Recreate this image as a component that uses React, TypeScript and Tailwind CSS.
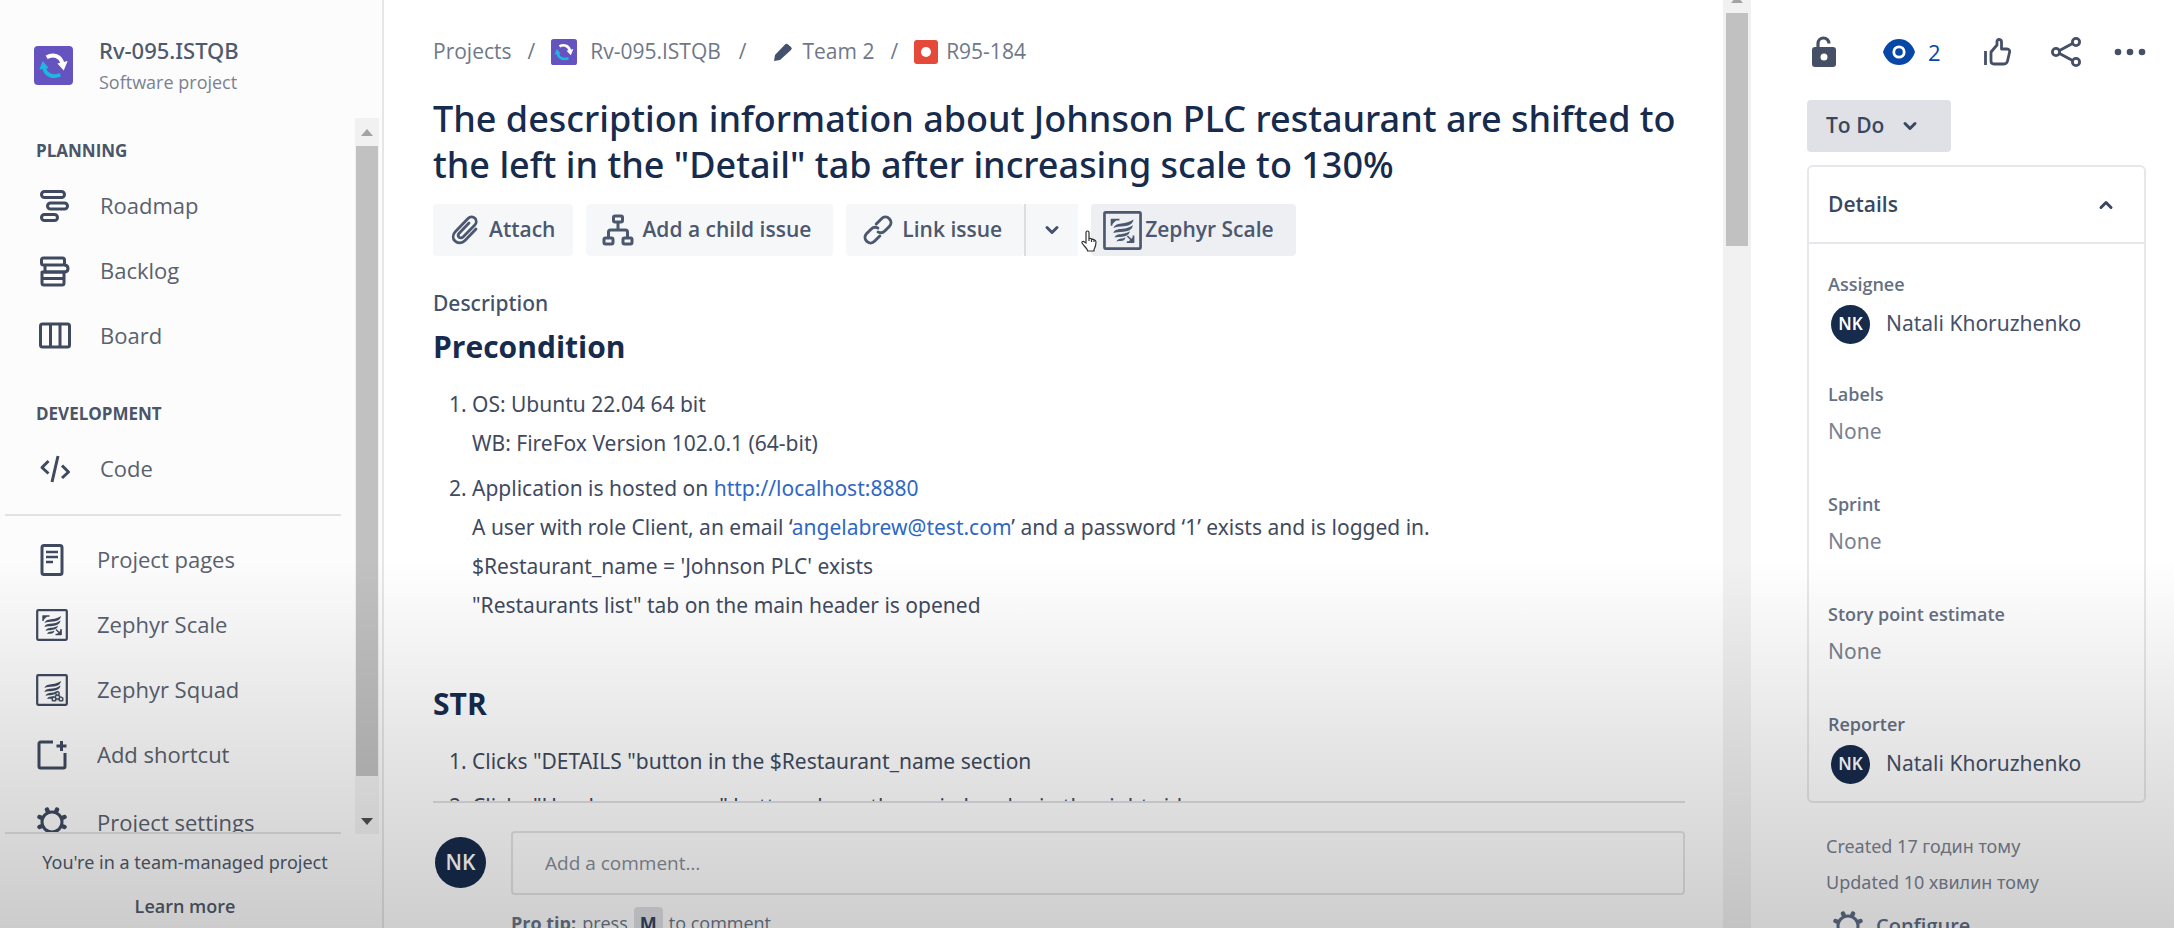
import React from "react";

const Arrow = ({ down = false, cls = "" }: { down?: boolean; cls?: string }) => (
  <svg viewBox="0 0 12 7" className={cls} aria-hidden="true">
    <path d={down ? "M0 0h12L6 7z" : "M0 7h12L6 0z"} fill="currentColor" />
  </svg>
);

const Logo = ({ cls }: { cls: string }) => (
  <svg viewBox="0 0 40 40" className={cls} aria-hidden="true">
    <rect width="40" height="40" rx="4" fill="#6554c0" />
    <path d="M13 11.500c7-4 14-1 16 6" stroke="#fff" strokeWidth="4" fill="none" />
    <path d="M24 18l10.500-2.500-4 9.500z" fill="#fff" />
    <path d="M27 29.500c-7 3-15 1-16.500-7" stroke="#1fb6e0" strokeWidth="4" fill="none" />
    <path d="M5.500 24l3.500-8.500 6 7z" fill="#1fb6e0" />
  </svg>
);

const Icon = ({ children, cls = "size-8" }: { children: React.ReactNode; cls?: string }) => (
  <svg
    viewBox="0 0 32 32"
    className={`shrink-0 ${cls}`}
    fill="none"
    stroke="currentColor"
    strokeWidth="3"
    strokeLinejoin="round"
    aria-hidden="true"
  >
    {children}
  </svg>
);

const Roadmap = () => (
  <Icon>
    <rect x="2.500" y="1.500" width="23" height="6" rx="3" />
    <rect x="8.500" y="13" width="20" height="6" rx="3" />
    <rect x="2.500" y="24.500" width="16" height="6" rx="3" />
  </Icon>
);
const Backlog = () => (
  <Icon>
    <rect x="2.500" y="3" width="23" height="7" rx="2" />
    <path d="M25 10c3 0 4 1 4 3.500S28 17 25 17H6V10" />
    <path d="M3 17h22v6.500H3zM3 23.500h22V28a2 2 0 0 1-2 2H5a2 2 0 0 1-2-2z" />
  </Icon>
);
const Board = () => (
  <Icon>
    <rect x="1.500" y="4" width="29" height="23" rx="2" />
    <path d="M11.500 4v23M21 4v23" />
  </Icon>
);
const Code = () => (
  <Icon>
    <path d="M9.500 8L3 14.500l6.500 6M23 12.500l6.500 6.500-6.500 6M19 3l-6 26" />
  </Icon>
);
const Pages = () => (
  <Icon>
    <rect x="6" y="1.500" width="20" height="29" rx="2" />
    <path d="M10 8h12M10 13h12M10 18h7" strokeWidth="2.500" />
  </Icon>
);
const Zephyr = ({ squad = false, cls = "size-8" }: { squad?: boolean; cls?: string }) => (
  <Icon cls={cls}>
    <rect x="1.200" y="1.200" width="29.600" height="29.600" rx="1" strokeWidth="2.200" />
    <g fill="currentColor" stroke="none">
      <path d="M8.500 14c1-3 4-3.500 8-4 3-.4 5.500-1 8.500-3-.5 4-4 5.200-8 5.600-3.500.3-6 .4-8.500 1.400z" />
      <path d="M8.500 18c.8-2.800 3.500-3 7.500-3.400 3-.3 5.500-1 8.500-3-.5 4-4 5-8 5.400-3.200.3-5.500.3-8 1z" />
      <path d="M9.500 21.800c1-2.500 3-2.700 6-3 2.700-.3 4.500-.8 6.500-2.200-.5 3.200-3.200 4.200-6.300 4.500-2.400.3-4 .2-6.200.7z" />
      <path d="M11 25c1-2 2.500-2.200 4.300-2.400 1.200-.1 2-.4 3.200-1.100-.4 2.300-2 3-3.900 3.200-1.400.1-2.300 0-3.600.3z" />
    </g>
    {squad ? (
      <g strokeWidth="1.400">
        <path d="M21.500 15.500l7 12.500H15z" fill="#e6e6e6" stroke="none" />
        <circle cx="21.500" cy="19.500" r="1.700" />
        <circle cx="18" cy="25" r="1.900" />
        <circle cx="25" cy="25" r="1.900" />
        <path d="M20.500 21l-1.500 2M22.500 21l1.500 2M20 25h3" />
      </g>
    ) : (
      <g>
        <path d="M7 12V7h6.500M25 20v5.500h-5.500" strokeWidth="1.400" />
        <path d="M7 7h4.500L7 11.500zM25.500 26H20l5.500-5.500z" fill="currentColor" stroke="none" />
        <path d="M24 24.500l-4-4" strokeWidth="1.400" />
      </g>
    )}
  </Icon>
);
const Shortcut = () => (
  <Icon>
    <path d="M17 3H4.500A1.500 1.500 0 0 0 3 4.500v23A1.500 1.500 0 0 0 4.500 29h23a1.500 1.500 0 0 0 1.500-1.500V14" />
    <path d="M25.500 2v10M20.500 7h10" />
  </Icon>
);
const Gear = () => (
  <Icon>
    <circle cx="16" cy="16" r="10" strokeWidth="3" />
    <path
      d="M12 6l-1-2.500M20 6l1-2.500M26 12l2.500-1M26 20l2.500 1M20 26l1 2.500M12 26l-1 2.500M6 20l-2.500 1M6 12l-2.500-1"
      strokeWidth="4.500"
      strokeLinecap="round"
    />
  </Icon>
);
const Clip = () => (
  <Icon>
    <path
      d="M27 15L16 26.500c-3 3-7.500 3-10 .5s-2.500-6.500.5-9.500L19 4.500c2-2 5-2 7-.2 1.800 2 1.600 5-.4 7L14 23c-1.200 1.200-3 1.200-4 .2s-1-2.700.2-4L20 9"
      strokeWidth="2.800"
      strokeLinecap="round"
    />
  </Icon>
);
const Tree = () => (
  <Icon>
    <rect x="11.500" y="2" width="9" height="6" rx="1.500" />
    <rect x="2" y="24" width="9" height="6" rx="1.500" />
    <rect x="21" y="24" width="9" height="6" rx="1.500" />
    <path d="M16 8v8M6.500 24v-6a2 2 0 0 1 2-2h15a2 2 0 0 1 2 2v6" />
  </Icon>
);
const Link = () => (
  <Icon>
    <g transform="rotate(-45 16 16)" strokeLinecap="round">
      <path d="M13 21.500H5.500a5.500 5.500 0 0 1 0-11H12a5.500 5.500 0 0 1 5.300 4" />
      <path d="M19 10.500h7.500a5.500 5.500 0 0 1 0 11H20a5.500 5.500 0 0 1-5.300-4" />
    </g>
  </Icon>
);
const Chevron = ({ up = false }: { up?: boolean }) => (
  <svg viewBox="0 0 16 16" className="size-4 shrink-0" fill="none" stroke="currentColor" strokeWidth="3" strokeLinecap="round" strokeLinejoin="round" aria-hidden="true">
    <path d={up ? "M3 10.500l5-5 5 5" : "M3 5.500l5 5 5-5"} />
  </svg>
);

const NavItem = ({ icon, label }: { icon: React.ReactNode; label: string }) => (
  <li>
    <a href="#" className="flex h-[65px] items-center gap-[29px] text-[#59616f]">
      <span className="text-[#3f4a60]">{icon}</span>
      {label}
    </a>
  </li>
);

const Sidebar = () => (
  <aside className="flex w-[384px] shrink-0 flex-col border-r-2 border-[#e6e6e8] bg-[#fcfcfc]">
    <div className="flex h-[118px] shrink-0 items-center gap-[26px] pt-3 pl-[34px]">
      <Logo cls="size-[39px]" />
      <div>
        <p className="font-['Noto_Sans'] text-[22px] leading-[34px] font-medium text-[#4f5a6e]">Rv-095.ISTQB</p>
        <p className="text-[18px] leading-[30px] text-[#7a8291]">Software project</p>
      </div>
    </div>
    <div className="flex h-[716px] shrink-0">
      <nav className="mr-[14px] ml-[5px] flex-1 overflow-hidden border-b-2 border-[#e2e2e4] text-[22px]">
        <h2 className="mt-[17px] pl-[31px] text-[17px] leading-8 font-bold text-[#4a5568]">PLANNING</h2>
        <ul className="mt-[6px] pl-[34px]">
          <NavItem icon={<Roadmap />} label="Roadmap" />
          <NavItem icon={<Backlog />} label="Backlog" />
          <NavItem icon={<Board />} label="Board" />
        </ul>
        <h2 className="mt-[30px] pl-[31px] text-[17px] leading-8 font-bold text-[#4a5568]">DEVELOPMENT</h2>
        <ul className="mt-[6px] pl-[34px]">
          <NavItem icon={<Code />} label="Code" />
        </ul>
        <hr className="mt-[13px] border-t-2 border-[#e2e2e4]" />
        <ul className="mt-[11px] pl-[31px] [&>li:last-child>a]:h-[70px]">
          <NavItem icon={<Pages />} label="Project pages" />
          <NavItem icon={<Zephyr />} label="Zephyr Scale" />
          <NavItem icon={<Zephyr squad />} label="Zephyr Squad" />
          <NavItem icon={<Shortcut />} label="Add shortcut" />
          <NavItem icon={<Gear />} label="Project settings" />
        </ul>
      </nav>
      <div className="mr-[3px] flex w-6 flex-col items-center bg-[#f1f1f1]">
        <div className="flex h-7 items-center">
          <Arrow cls="w-3 text-[#a3a3a3]" />
        </div>
        <div className="h-[630px] w-[22px] bg-[#c1c1c1]" />
        <div className="flex flex-1 items-center">
          <Arrow down cls="mt-8 w-3 text-[#505050]" />
        </div>
      </div>
    </div>
    <div className="flex flex-col items-center pr-3 text-[18px] text-[#505a6c]">
      <p className="mt-3 font-['Noto_Sans'] leading-8">You're in a team-managed project</p>
      <a href="#" className="mt-3 leading-8 font-semibold">
        Learn more
      </a>
    </div>
  </aside>
);

const Btn = ({ children, cls = "bg-[#f6f7f8] gap-2 pl-4 pr-[18px]" }: { children: React.ReactNode; cls?: string }) => (
  <button type="button" className={`flex h-[52px] items-center rounded-sm font-semibold text-[#4c5870] ${cls}`}>
    {children}
  </button>
);

const Main = () => (
  <main className="flex min-w-0 flex-1 flex-col pr-[38px] pl-[49px]">
    <nav className="flex h-[104px] shrink-0 items-center text-[21px] text-[#6f7888]">
      <a href="#">Projects</a>
      <span className="mx-4">/</span>
      <a href="#" className="flex items-center gap-[13px]">
        <Logo cls="size-[26px]" />
        Rv-095.ISTQB
      </a>
      <span className="mx-[18px]">/</span>
      <a href="#" className="ml-2 flex items-center gap-[10px]">
        <svg viewBox="0 0 20 20" className="size-5 text-[#42526e]" aria-hidden="true">
          <path d="M1 19l1-6L12 2.500a2 2 0 0 1 3 0L18 5a2 2 0 0 1 0 3L7 18z" fill="currentColor" />
        </svg>
        Team 2
      </a>
      <span className="mx-4">/</span>
      <a href="#" className="flex items-center gap-2">
        <svg viewBox="0 0 24 24" className="size-6" aria-hidden="true">
          <rect width="24" height="24" rx="3" fill="#e5493a" />
          <circle cx="12" cy="12" r="5" fill="#fff" />
        </svg>
        R95-184
      </a>
    </nav>
    <h1 className="-mt-2 font-['Noto_Sans'] text-[36px] leading-[46px] font-medium text-[#172b4d]">
      The description information about Johnson PLC restaurant are shifted to the left in the "Detail" tab after increasing scale to 130%
    </h1>
    <div className="mt-4 flex shrink-0 text-[21px]">
      <Btn>
        <Clip />
        Attach
      </Btn>
      <div className="ml-[13px]">
        <Btn cls="gap-2 bg-[#f6f7f8] pr-[22px] pl-4">
          <Tree />
          Add a child issue
        </Btn>
      </div>
      <div className="ml-[13px] flex">
        <Btn cls="gap-2 bg-[#f6f7f8] pr-[22px] pl-4">
          <Link />
          Link issue
        </Btn>
        <button type="button" aria-label="More link options" className="grid h-[52px] w-[54px] place-items-center border-l-2 border-[#dcdee2] bg-[#f6f7f8] text-[#42526e]">
          <Chevron />
        </button>
      </div>
      <div className="relative ml-[13px]">
        <Btn cls="gap-[3px] bg-[#eeeff2] pr-[22px] pl-3">
          <Zephyr cls="size-[39px]" />
          Zephyr Scale
        </Btn>
        <svg viewBox="0 0 16 22" className="absolute top-[26px] left-[-10px] h-[22px] w-4" fill="#fff" stroke="#333" strokeWidth="1.200" aria-hidden="true">
          <path d="M5 13V2.500a1.500 1.500 0 0 1 3 0V8l5 1.500c1.500.5 2 1 2 2.500 0 4-1 5.500-2 7.500v1.500H6.500V20C5 17.500 2.500 15.500 1 13c-.5-1.500 1.500-2 2.500-1zM8 8v3M10.500 9v3M13 10v2" />
        </svg>
      </div>
    </div>
    <section className="mt-8 h-[515px] shrink-0 overflow-hidden border-b-2 border-[#e0e0e2] font-['Noto_Sans'] text-[#3f4a5f]">
      <h2 className="text-[21px] leading-[30px] font-medium text-[#44516a]">Description</h2>
      <h3 className="mt-3 font-['Open_Sans'] text-[30px] leading-[34px] font-bold text-[#172b4d]">Precondition</h3>
      <ol className="mt-[21px] ml-[39px] list-decimal text-[21px] leading-[39px]">
        <li>
          OS: Ubuntu 22.04 64 bit
          <br />
          WB: FireFox Version 102.0.1 (64-bit)
        </li>
        <li className="mt-[6px]">
          Application is hosted on <a href="#" className="text-[#2f68c4]">http://localhost:8880</a>
          <br />A user with role Client, an email ‘<a href="#" className="text-[#2f68c4]">angelabrew@test.com</a>’ and a password ‘1’ exists and is logged in.
          <br />
          $Restaurant_name = 'Johnson PLC' exists
          <br />
          "Restaurants list" tab on the main header is opened
        </li>
      </ol>
      <h3 className="mt-[62px] font-['Open_Sans'] text-[30px] leading-[34px] font-bold text-[#172b4d]">STR</h3>
      <ol className="mt-[21px] ml-[39px] list-decimal text-[21px] leading-[39px]">
        <li>Clicks "DETAILS "button in the $Restaurant_name section</li>
        <li className="mt-[6px]">Clicks "Hamburger menu" button above the main header in the right side</li>
      </ol>
    </section>
    <div className="mt-7 flex items-start gap-[25px] pl-[2px]">
      <span className="mt-[6px] grid size-[51px] shrink-0 place-items-center rounded-full bg-[#172b4d] text-[21px] font-semibold text-white">NK</span>
      <div className="flex-1">
        <input aria-label="Add a comment" placeholder="Add a comment…" className="h-[64px] w-full rounded border-2 border-[#e3e4e6] px-8 text-[19px] placeholder:text-[#868d99]" />
        <p className="mt-3 flex items-center text-[18px] leading-8 text-[#6a7588]">
          <b className="mr-[6px]">Pro tip:</b> press
          <kbd className="mx-[6px] rounded bg-[#dfe1e6] px-[6px] font-[inherit] font-bold text-[#344563]">M</kbd>
          to comment
        </p>
      </div>
    </div>
  </main>
);

const Field = ({ label, value, person = false }: { label: string; value: string; person?: boolean }) => (
  <div className="h-[110px]">
    <dt className="text-[18px] leading-[38px] font-semibold text-[#667083]">{label}</dt>
    <dd className={`flex items-center font-['Noto_Sans'] text-[21px] ${person ? "h-[42px] text-[#44516a]" : "h-[38px] text-[#7a8291]"}`}>
      {person && <span className="mr-4 ml-[3px] grid size-[39px] place-items-center rounded-full bg-[#172b4d] text-[17px] font-semibold text-white">NK</span>}
      {value}
    </dd>
  </div>
);

const Details = () => (
  <aside className="flex w-[423px] shrink-0 flex-col pr-7 pl-14">
    <div className="flex h-[100px] shrink-0 items-center pt-[4px] pl-[4px] text-[#454f66]">
      <button type="button" aria-label="Restrictions">
        <svg viewBox="0 0 26 34" className="h-[34px] w-[26px]" aria-hidden="true">
          <path d="M7 14V8.500a5.500 5.500 0 0 1 11 0" fill="none" stroke="currentColor" strokeWidth="3.200" />
          <rect x="1" y="12" width="24" height="20" rx="3" fill="currentColor" />
          <circle cx="13" cy="22" r="3.500" fill="#fff" />
        </svg>
      </button>
      <button type="button" aria-label="Watchers" className="ml-[45px] flex items-center gap-3 text-[22px] text-[#0747a6]">
        <svg viewBox="0 0 34 28" className="h-7 w-[34px]" aria-hidden="true">
          <path d="M1 14C4 5 10 1 17 1s13 4 16 13c-3 9-9 13-16 13S4 23 1 14z" fill="currentColor" />
          <circle cx="17" cy="14" r="5.200" fill="none" stroke="#fff" strokeWidth="2.800" />
        </svg>
        2
      </button>
      <button type="button" aria-label="Like" className="ml-[42px]">
        <svg viewBox="0 0 28 28" className="size-7" fill="none" stroke="currentColor" strokeWidth="2.800" strokeLinejoin="round" aria-hidden="true">
          <path d="M2.500 13v14M8 14l6-7V3.500c0-3 4.500-2.500 4.500.500V11H24c2 0 3 1.500 2.500 3.500L24.500 23c-.5 2-1.500 3-3.500 3H11c-2 0-3-1-3-3z" />
        </svg>
      </button>
      <button type="button" aria-label="Share" className="ml-10">
        <svg viewBox="0 0 30 30" className="size-[30px]" fill="none" stroke="currentColor" strokeWidth="2.800" aria-hidden="true">
          <circle cx="5" cy="15" r="3.600" />
          <circle cx="25" cy="5" r="3.600" />
          <circle cx="25" cy="25" r="3.600" />
          <path d="M8.500 13.500l13-7M8.500 16.500l13 7" />
        </svg>
      </button>
      <button type="button" aria-label="More actions" className="ml-[33px]">
        <svg viewBox="0 0 32 8" className="h-2 w-8" fill="currentColor" aria-hidden="true">
          <circle cx="4" cy="4" r="3.300" />
          <circle cx="16" cy="4" r="3.300" />
          <circle cx="28" cy="4" r="3.300" />
        </svg>
      </button>
    </div>
    <button type="button" className="flex h-[52px] w-[144px] shrink-0 items-center gap-[18px] rounded bg-[#dfe1e6] pl-[19px] text-[21px] font-semibold text-[#3a4760]">
      To Do
      <Chevron />
    </button>
    <section className="mt-[13px] shrink-0 rounded-md border-2 border-[#e6e7ea]">
      <h2 className="border-b-2 border-[#e6e7ea] text-[#3a4760]">
        <button type="button" className="flex h-[75px] w-full items-center justify-between pr-[30px] pl-[19px] text-[21px] font-semibold">
          Details
          <Chevron up />
        </button>
      </h2>
      <dl className="h-[557px] pt-[21px] pl-[19px]">
        <Field label="Assignee" value="Natali Khoruzhenko" person />
        <Field label="Labels" value="None" />
        <Field label="Sprint" value="None" />
        <Field label="Story point estimate" value="None" />
        <Field label="Reporter" value="Natali Khoruzhenko" person />
      </dl>
    </section>
    <div className="mt-[25px] shrink-0 pl-[19px] font-['Noto_Sans'] text-[18px] leading-9 text-[#7a8291]">
      <p>Created 17 годин тому</p>
      <p>Updated 10 хвилин тому</p>
      <button type="button" className="mt-2 ml-[6px] flex h-9 items-center gap-3 font-['Open_Sans'] text-[20px] font-semibold text-[#5e6c84]">
        <Gear />
        Configure
      </button>
    </div>
  </aside>
);

export default function App() {
  return (
    <div className="relative flex h-screen overflow-hidden bg-white font-['Open_Sans','Noto_Sans',sans-serif]">
      <Sidebar />
      <Main />
      <div className="flex w-7 shrink-0 flex-col items-center bg-[#f1f1f1]">
        <div className="h-[13px]">
          <Arrow cls="-mt-1 w-3 text-[#a3a3a3]" />
        </div>
        <div className="h-[233px] w-[22px] bg-[#c1c1c1]" />
      </div>
      <Details />
      <div className="pointer-events-none absolute inset-x-0 bottom-0 h-[370px] bg-linear-to-b from-transparent via-black/10 to-black/19" />
    </div>
  );
}
